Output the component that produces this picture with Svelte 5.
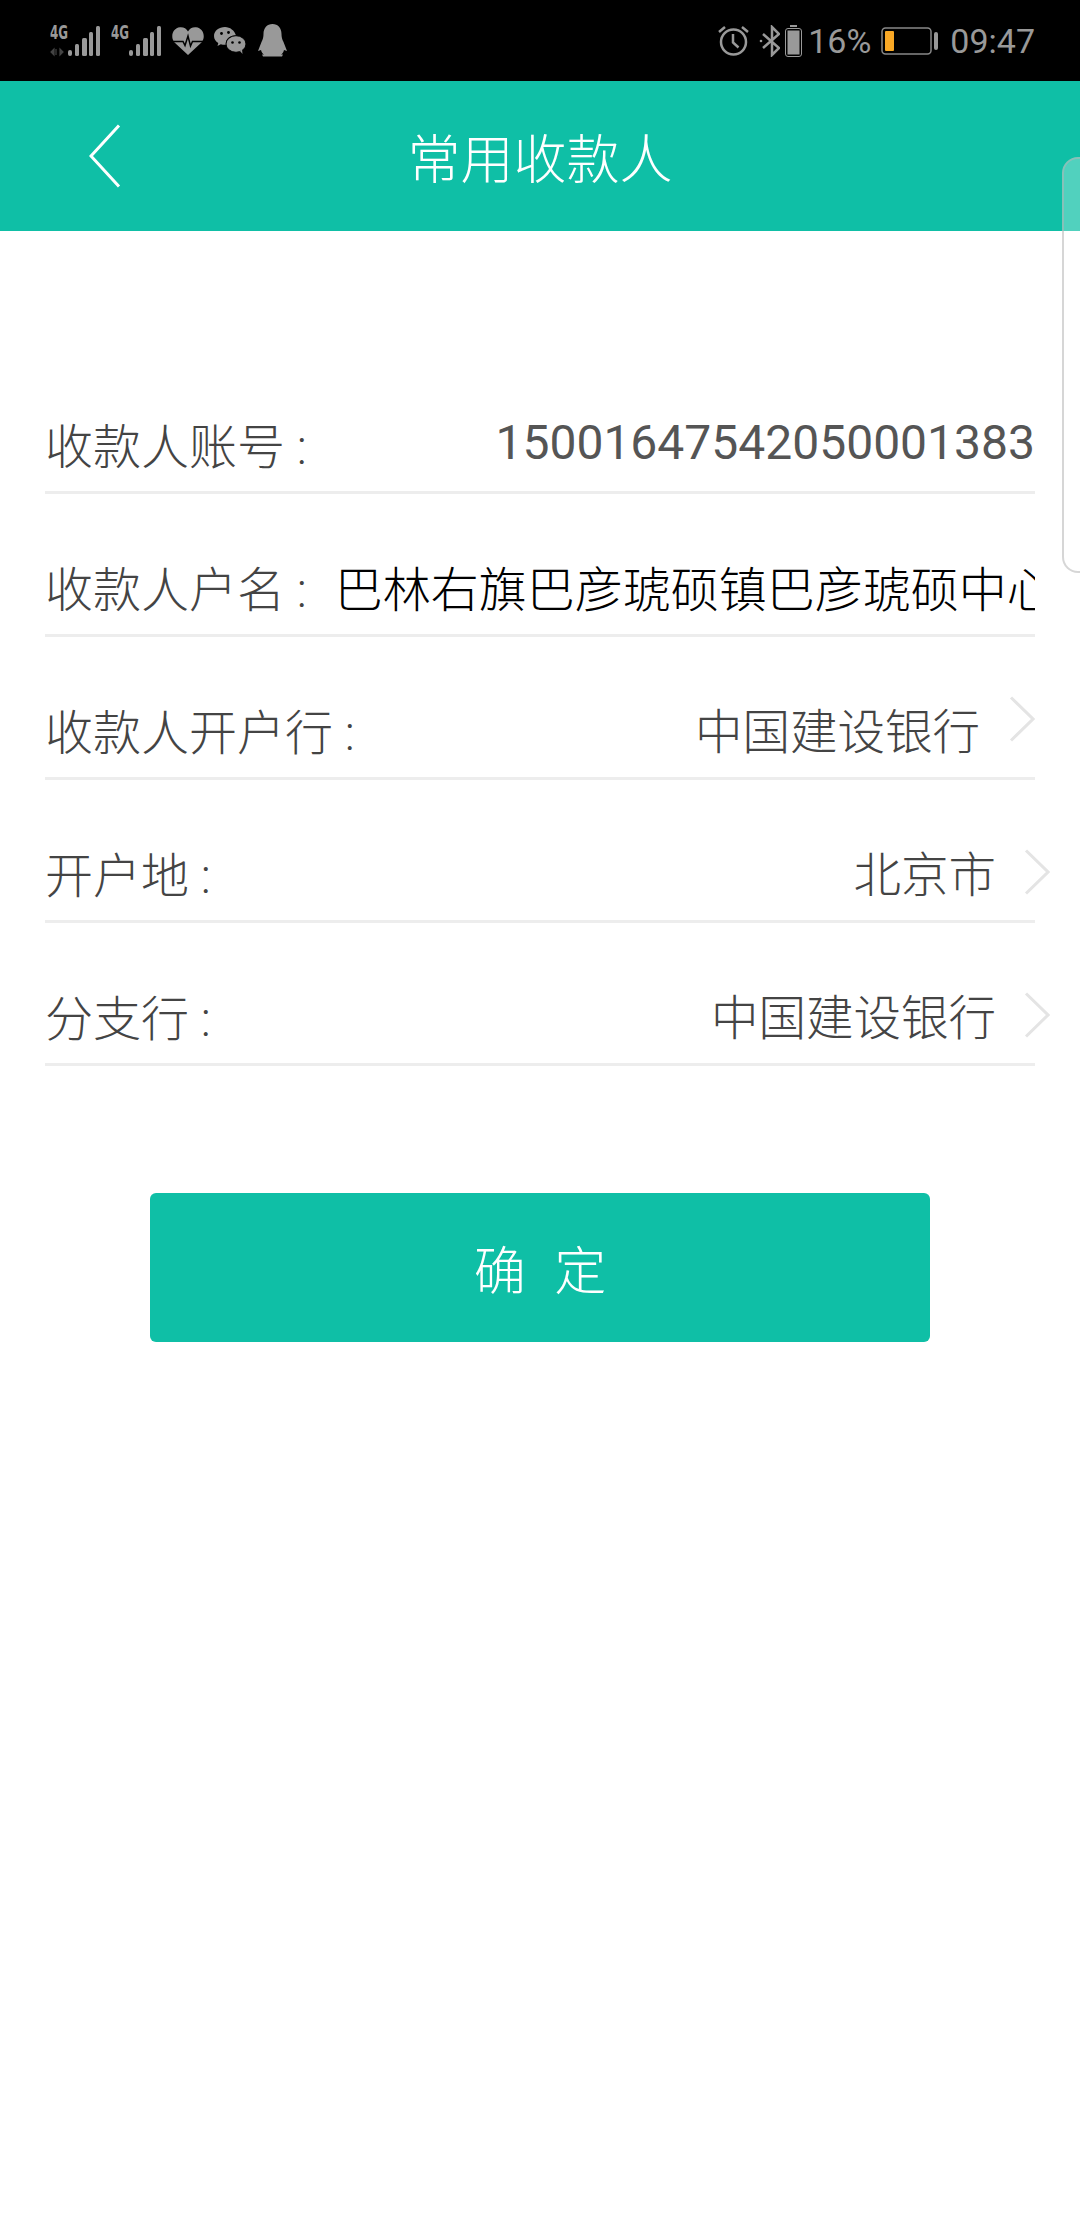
<script>
  const rows = [
    { label: '收款人开户行 :', value: '中国建设银行', cls: 'bank' },
    { label: '开户地 :', value: '北京市', cls: '' },
    { label: '分支行 :', value: '中国建设银行', cls: '' }
  ];
</script>

{#snippet signal(up)}
  <svg class="signal" width="50" height="44" viewBox="0 -12 50 44">
    <text x="0" y="14" class="net" textLength="18" lengthAdjust="spacingAndGlyphs">4G</text>
    {#if up}
      <path d="M4 30v-6l-3 3zM6 30v-6M10 24v6l3-3z" fill="#444" stroke="#444" stroke-width="1.2" />
    {/if}
    <rect x="18" y="25" width="4" height="6" rx="2" />
    <rect x="25" y="19" width="4" height="12" rx="1.5" />
    <rect x="32" y="13" width="5" height="18" rx="1.5" />
    <rect x="39" y="7" width="4" height="24" rx="1.5" />
    <rect x="46" y="1" width="4" height="30" rx="1.5" />
  </svg>
{/snippet}

{#snippet chevron()}
  <svg class="chev" width="26" height="46" viewBox="0 0 26 46">
    <path d="M2 1.5 24 23 2 44.5" fill="none" stroke="#e4e4e4" stroke-width="3" />
  </svg>
{/snippet}

<div class="page">
  <div class="status">
    <div class="left">
      {@render signal(true)}
      {@render signal(false)}
      <svg class="heart" width="32" height="28" viewBox="0 0 32 28">
        <path d="M16 28 2.500 15.500C-2 10 .5 1 8 .3 11.500 0 14.500 1.500 16 4.500 17.500 1.500 20.500 0 24 .3 31.500 1 34 10 29.500 15.500Z" fill="#999" />
        <path d="M0 14.500H11L13 18.500 16 9 18.500 19 20.500 14.500H32" fill="none" stroke="#000" stroke-width="1.500" />
      </svg>
      <svg class="wechat" width="32" height="27" viewBox="0 0 32 27">
        <path d="M11 0C5 0 0 3.800 0 9c0 3 1.700 5.400 4.300 7L3.500 19l3.300-1.800c1.300.4 2.700.6 4.200.6h1C11 12 16 8 22 8.500 20.500 3.500 16 0 11 0Z" fill="#999" />
        <ellipse cx="22" cy="17" rx="10" ry="8.300" fill="#999" stroke="#000" stroke-width="1" />
        <path d="M26 24l2.500 3-.5-4.500z" fill="#999" />
        <circle cx="7.500" cy="6.500" r="1.400" fill="#000" />
        <circle cx="14.500" cy="5.500" r="1.400" fill="#000" />
        <circle cx="18.500" cy="15.500" r="1.300" fill="#000" />
        <circle cx="25.500" cy="15.500" r="1.300" fill="#000" />
      </svg>
      <svg class="qq" width="29" height="33" viewBox="0 0 29 33">
        <path d="M14.500 0C9 0 5.500 4 5.500 10c0 3-.5 5-2 8L0 27l3-1c.5 2 1.500 3.500 3 4.500H4l1 2h19l1-2h-2c1.500-1 2.500-2.500 3-4.500l3 1-3.500-9c-1.500-3-2-5-2-8 0-6-3.500-10-9-10Z" fill="#999" />
      </svg>
    </div>
    <div class="right">
      <svg class="alarm" width="31" height="31" viewBox="0 0 31 31">
        <circle cx="15.500" cy="17" r="12.500" fill="none" stroke="#999" stroke-width="2.500" />
        <path d="M15 9v8.500l5.500 5M1 7l6-5M30 7l-6-5" fill="none" stroke="#999" stroke-width="2.500" />
      </svg>
      <svg class="bt" width="21" height="32" viewBox="0 0 21 32">
        <path d="M4 9 20 23 13 30V2L20 9 4 23" fill="none" stroke="#999" stroke-width="2.500" />
        <circle cx="2" cy="16" r="1.300" fill="#999" />
      </svg>
      <svg class="mini" width="17" height="32" viewBox="0 0 17 32">
        <rect x="5" y="0" width="7" height="2" fill="#999" />
        <rect x=".5" y="3.500" width="16" height="28" rx="2.500" fill="none" stroke="#999" />
        <rect x="2.500" y="5.500" width="12" height="24" fill="#999" />
      </svg>
      <span class="pct">16%</span>
      <svg class="batt" width="58" height="28" viewBox="0 0 58 28">
        <rect x="1" y="1" width="49" height="26" rx="3.500" fill="none" stroke="#888" stroke-width="1.500" />
        <rect x="4" y="4" width="9" height="20" rx="1" fill="#f9a825" />
        <rect x="53" y="5" width="4" height="18" rx="2" fill="#999" />
      </svg>
      <span class="time">09:47</span>
    </div>
  </div>

  <header>
    <svg class="back" width="32" height="64" viewBox="0 0 32 64">
      <path d="M30 1.500 2 32 30 62.500" fill="none" stroke="#fff" stroke-width="3" />
    </svg>
    <h1>常用收款人</h1>
  </header>

  <main>
    <div class="row">
      <span class="label">收款人账号 :</span>
      <span class="value num">15001647542050001383</span>
    </div>
    <div class="row">
      <span class="label">收款人户名 :</span>
      <span class="value name">巴林右旗巴彦琥硕镇巴彦琥硕中心</span>
    </div>
    {#each rows as r}
      <div class="row {r.cls}">
        <span class="label">{r.label}</span>
        <span class="value">{r.value}</span>
        {@render chevron()}
      </div>
    {/each}

    <button type="button">确 定</button>
  </main>

  <div class="floatball"></div>
</div>

<style>
  :global(body) {
    margin: 0;
    background: #fff;
  }

  .page {
    position: relative;
    width: 1080px;
    height: 2240px;
    overflow: hidden;
    background: #fff;
    font-family: Roboto, "Noto Sans CJK SC", sans-serif;
  }

  .status {
    height: 81px;
    background: #000;
    display: flex;
    justify-content: space-between;
    align-items: center;
    padding: 0 45px 0 50px;
    color: #999;
  }

  .left,
  .right {
    display: flex;
    align-items: center;
  }

  .signal {
    fill: #999;
    margin-right: 11px;
    margin-top: -12px;
  }

  .net {
    font-family: "DejaVu Sans Condensed", "DejaVu Sans", sans-serif;
    font-weight: bold;
    font-size: 19px;
    fill: #999;
  }

  .wechat {
    margin-left: 10px;
  }

  .qq {
    margin-left: 12px;
  }

  .bt {
    margin-left: 10px;
  }

  .mini {
    margin-left: 5px;
  }

  .pct {
    font-size: 34px;
    margin-left: 6px;
  }

  .batt {
    margin-left: 10px;
  }

  .time {
    font-size: 34px;
    margin-left: 11px;
  }

  header {
    height: 150px;
    background: #0fbfa6;
    display: flex;
    align-items: center;
    justify-content: center;
    position: relative;
  }

  .back {
    position: absolute;
    left: 89px;
    top: 43px;
  }

  h1 {
    margin: 0;
    font-size: 53px;
    font-weight: 300;
    color: #fff;
  }

  main {
    padding: 120px 45px 0;
    display: flex;
    flex-direction: column;
  }

  .row {
    height: 143px;
    box-sizing: border-box;
    border-bottom: 3px solid #ededed;
    display: flex;
    align-items: center;
    padding-top: 43px;
    font-size: 48px;
    font-weight: 300;
    color: #444;
    white-space: nowrap;
  }

  .label {
    flex: none;
  }

  .value {
    flex: 1;
    text-align: right;
    overflow: hidden;
    font-size: 47.5px;
  }

  .num {
    font-size: 48px;
    font-weight: 400;
    color: #555;
  }

  .name {
    font-size: 48px;
    color: #000;
    text-align: left;
    margin-left: 28px;
  }

  .chev {
    flex: none;
    margin-left: 28px;
    margin-right: -15px;
    margin-top: 1px;
  }

  .bank .chev {
    margin-right: 0;
    margin-top: -19px;
    margin-left: 29px;
  }

  button {
    margin: 127px auto 0;
    width: 780px;
    height: 149px;
    border: none;
    border-radius: 6px;
    background: #0fbfa6;
    color: #fff;
    font-family: inherit;
    font-size: 52px;
    font-weight: 300;
    word-spacing: 16px;
  }

  .floatball {
    position: absolute;
    left: 1062px;
    top: 157px;
    width: 40px;
    height: 416px;
    box-sizing: border-box;
    border: 2px solid rgba(180, 180, 180, 0.55);
    border-radius: 16px;
    background: rgba(255, 255, 255, 0.28);
  }
</style>
